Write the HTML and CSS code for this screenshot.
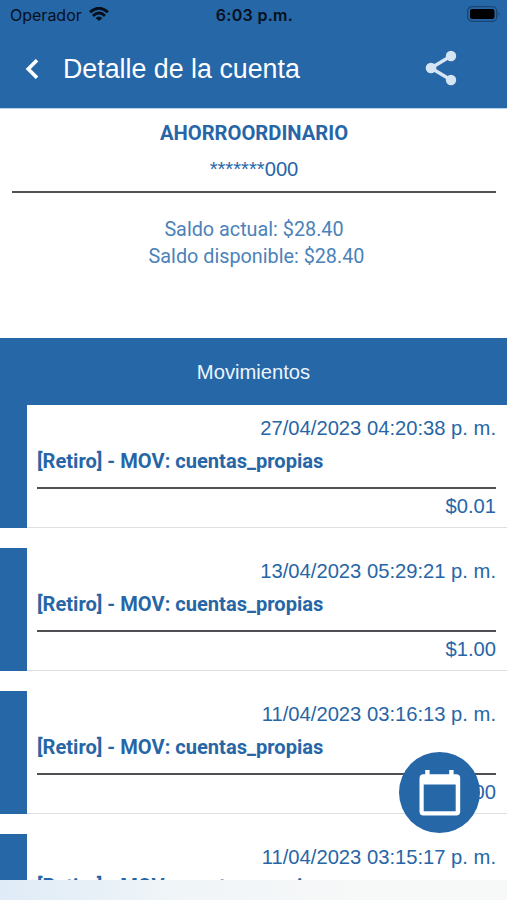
FILE: index.html
```html
<!DOCTYPE html>
<html lang="es">
<head>
<meta charset="utf-8">
<title>Detalle de la cuenta</title>
<link rel="stylesheet" href="styles.css">
</head>
<body>
<div class="screen">
  <header class="top">
    <div class="status">
      <div class="carrier"><span>Operador</span>
        <svg class="wifi" viewBox="0 0 20 14"><path d="M1 5.2Q10-2.7 19 5.2M4 8.8Q10 3.4 16 8.8" fill="none" stroke="#06101c" stroke-width="2.9"/><path d="M6.6 11Q10 8 13.4 11L10 14Z" fill="#06101c"/></svg>
      </div>
      <div class="time">6:03 p.m.</div>
      <svg class="battery" viewBox="0 0 34 16"><rect x=".7" y=".7" width="29" height="14.6" rx="4.4" fill="none" stroke="#1b4674" stroke-width="1.3"/><rect x="3" y="3" width="24.5" height="10" rx="2.2" fill="#000"/><path d="M31.5 6Q33.5 8 31.5 10Z" fill="#1b4674"/></svg>
    </div>
    <div class="nav">
      <svg class="back" viewBox="0 0 14 20"><path d="M12 1.2 3.2 10l8.8 8.8" fill="none" stroke="#fff" stroke-width="3.6"/></svg>
      <h1>Detalle de la cuenta</h1>
      <svg class="share" viewBox="0 0 32 36"><path d="M26 6 6 18l20 12" fill="none" stroke="#d6e5f3" stroke-width="3.4"/><g fill="#d6e5f3"><circle cx="26" cy="6" r="5.2"/><circle cx="6" cy="18" r="5.3"/><circle cx="26" cy="30" r="5.2"/></g></svg>
    </div>
  </header>
  <section class="account">
    <h2>AHORROORDINARIO</h2>
    <p class="number">*******000</p>
    <div class="balances"><p class="actual">Saldo actual: $28.40</p><p class="available">Saldo disponible: $28.40</p></div>
  </section>
  <h3 class="heading">Movimientos</h3>
  <main class="list">
    <article class="item"><p class="date">27/04/2023 04:20:38 p. m.</p><p class="desc">[Retiro] - MOV: cuentas_propias</p><p class="amount">$0.01</p></article>
    <article class="item"><p class="date">13/04/2023 05:29:21 p. m.</p><p class="desc">[Retiro] - MOV: cuentas_propias</p><p class="amount">$1.00</p></article>
    <article class="item"><p class="date">11/04/2023 03:16:13 p. m.</p><p class="desc">[Retiro] - MOV: cuentas_propias</p><p class="amount">$1.00</p></article>
    <article class="item"><p class="date">11/04/2023 03:15:17 p. m.</p><p class="desc">[Retiro] - MOV: cuentas_propias</p></article>
  </main>
  <footer class="bottom"></footer>
  <button class="fab" aria-label="Calendario">
    <svg viewBox="0 0 42 46"><path d="M6.2 0h4.4v4.2h19.6V0h4.4v4.2h2.6a4 4 0 0 1 4 4v33.3a4 4 0 0 1-4 4H4.5a4 4 0 0 1-4-4V8.200a4 4 0 0 1 4-4h1.700ZM4.700 14.500v26.700h32V14.500Z" fill="#fff" fill-rule="evenodd"/></svg>
  </button>
</div>
</body>
</html>
```
FILE: styles.css
```css
* { box-sizing: border-box; }
body, h1, h2, h3, p { margin: 0; font-weight: 400; }
body { font-family: "Liberation Sans", Arial, sans-serif; color: #2766a6; background: #fff; }
svg { display: block; }
.screen { position: relative; width: 507px; height: 900px; overflow: hidden; display: flex; flex-direction: column; }
.top { height: 109px; flex: none; background: #2667a8; border-bottom: 1px solid #b4d2ea; }
.status { height: 30px; display: grid; grid-template-columns: 1fr auto 1fr; align-items: center; padding: 0 6px 0 10px; color: #06101c; font: 16px/30px Inter, sans-serif; }
.carrier { display: flex; align-items: center; gap: 7px; }
.wifi { width: 20px; height: 14px; margin-top: -2px; }
.time { font-weight: 600; letter-spacing: .3px; margin-right: 2px; }
.battery { width: 34px; height: 16px; justify-self: end; margin-top: -2px; }
.nav { height: 78px; display: flex; align-items: center; padding: 0 50px 0 25px; }
.back { width: 14px; height: 20px; margin-right: 24px; }
.nav h1 { flex: 1; font-size: 26.8px; line-height: 30px; color: #fff; }
.share { width: 32px; height: 36px; margin-top: -2px; }
.account { height: 229px; flex: none; padding: 9px 11px 0 12px; text-align: center; }
.account h2 { font: 700 20.2px/30px Roboto, sans-serif; }
.number { height: 45px; padding-top: 6px; font-size: 20.2px; line-height: 30px; }
.number { border-bottom: 2px solid #4e5053; }
.balances { padding-top: 23px; font: 300 19.8px/27px Roboto, sans-serif; color: #4b82b9; }
.available { padding-left: 5px; }
.heading { height: 67px; flex: none; background: #2667a8; color: #edf5fc; font-size: 20.2px; line-height: 68px; text-align: center; }
.list { height: 475px; flex: none; overflow: hidden; display: flex; flex-direction: column; gap: 20px; }
.item { height: 123px; flex: none; border-left: 27px solid #2667a8; padding: 7px 11px 0 10px; background: linear-gradient(#dedfe0, #dedfe0) bottom / 100% 1px no-repeat; }
.date, .amount { font-size: 20.2px; line-height: 32px; text-align: right; }
.desc { height: 45px; padding-top: 1px; border-bottom: 2px solid #4e5053; font: 700 20.1px/32px Roboto, sans-serif; }
.item:last-child .desc { margin-top: -4px; }
.amount { line-height: 34px; }
.bottom { height: 20px; flex: none; background: linear-gradient(90deg, #dfebf7, #f0f5f8 35%, #f7f8f8 70%); }
.fab { position: absolute; left: 399px; top: 752px; width: 81px; height: 81px; border: 0; border-radius: 50%; padding: 0; background: #2667a8; display: grid; place-items: center; }
.fab svg { width: 42px; height: 46px; }
```
